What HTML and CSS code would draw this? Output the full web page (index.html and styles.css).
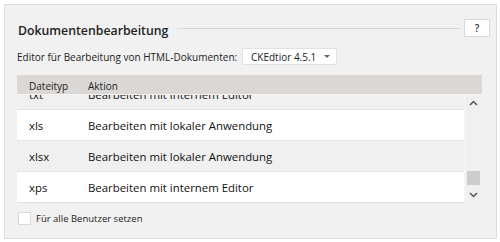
FILE: index.html
```html
<!DOCTYPE html>
<html lang="de">
<head>
  <meta charset="UTF-8">
  <title>Dokumentenbearbeitung</title>
  <link rel="stylesheet" href="styles.css">
</head>
<body>
  <div class="panel">
    <div class="title-row">
      <span class="title">Dokumentenbearbeitung</span>
      <span class="title-line"></span>
      <button class="help">?</button>
    </div>

    <div class="editor-row">
      <span class="editor-label">Editor für Bearbeitung von HTML-Dokumenten:</span>
      <div class="select">
        <span>CKEdtior 4.5.1</span>
        <span class="caret"></span>
      </div>
    </div>

    <div class="grid">
      <div class="grid-head">
        <span class="col-type">Dateityp</span>
        <span class="col-action">Aktion</span>
      </div>
      <div class="grid-main">
        <div class="grid-body">
          <div class="rows">
            <div class="row alt"><span class="col-type">txt</span><span class="col-action">Bearbeiten mit internem Editor</span></div>
            <div class="row"><span class="col-type">xls</span><span class="col-action">Bearbeiten mit lokaler Anwendung</span></div>
            <div class="row alt"><span class="col-type">xlsx</span><span class="col-action">Bearbeiten mit lokaler Anwendung</span></div>
            <div class="row"><span class="col-type">xps</span><span class="col-action">Bearbeiten mit internem Editor</span></div>
          </div>
        </div>
        <div class="scrollbar">
          <svg class="arrow" width="9" height="6" viewBox="0 0 9 6"><path d="M1 5 L4.5 1.5 L8 5" fill="none" stroke="#555" stroke-width="1.5"/></svg>
          <div class="track"><div class="thumb"></div></div>
          <svg class="arrow" width="9" height="6" viewBox="0 0 9 6"><path d="M1 1 L4.5 4.5 L8 1" fill="none" stroke="#555" stroke-width="1.5"/></svg>
        </div>
      </div>
    </div>

    <label class="check-row">
      <span class="checkbox"></span>
      <span>Für alle Benutzer setzen</span>
    </label>
  </div>
</body>
</html>
```

FILE: styles.css
```css
body { margin: 0; background: #ffffff; font-family: "Open Sans", "Noto Sans", sans-serif; font-size: 10px; color: #222; }
.panel { box-sizing: border-box; margin: 4px; width: 493px; height: 235px; background: #f1f1f1; border: 1px solid #dcdcdc; padding: 0 13px 0 12px; }

.title-row { display: flex; align-items: center; height: 18px; margin-top: 14px; }
.title { font-weight: 600; font-size: 12.3px; padding: 5px 0 0 1px; white-space: nowrap; }
.title-line { flex: 1; height: 1px; background: #d6d6d6; margin: 0 4px 0 9px; }
.help { box-sizing: border-box; width: 26px; height: 18px; margin-right: -7px; border: 1px solid #dadada; background: #fff; font-family: inherit; font-size: 10px; font-weight: 600; padding: 0; color: #333; }

.editor-row { display: flex; align-items: center; margin-top: 11px; height: 17px; }
.editor-label { width: 225px; white-space: nowrap; }
.select { box-sizing: border-box; display: flex; align-items: center; justify-content: space-between; width: 95px; height: 17px; background: #fff; border: 1px solid #e2e2e2; padding: 0 6px 0 8px; white-space: nowrap; }
.caret { width: 0; height: 0; border-left: 3px solid transparent; border-right: 3px solid transparent; border-top: 3px solid #666; }

.grid { margin-top: 10px; width: 465px; }
.grid-head { display: flex; align-items: center; height: 19px; background: #dbd7d5; border-bottom: 1px solid #f6f6f6; }
.grid-head span { padding-top: 2px; }
.col-type { width: 59px; padding-left: 12px; }
.col-action { flex: 1; white-space: nowrap; }
.grid-main { display: flex; height: 108px; }
.grid-body { flex: 1; overflow: hidden; border-bottom: 1px solid #e0e0e0; }
.rows { margin-top: -16px; }
.row { display: flex; align-items: center; height: 30px; background: #fff; border-bottom: 1px solid #e3e3e3; font-size: 11.4px; color: #111; }
.row.alt { background: #f0f0f0; }
.scrollbar { width: 17px; display: flex; flex-direction: column; align-items: center; background: #f0f0f0; border-left: 1px solid #f6f6f6; }
.arrow { margin: 5px 0; }
.track { flex: 1; width: 100%; display: flex; flex-direction: column; justify-content: flex-end; }
.thumb { height: 14px; margin: 0 2px 2px; background: #cdcdcd; }

.check-row { display: flex; align-items: center; gap: 5px; margin-top: 9px; padding-left: 1px; font-size: 9.5px; }
.checkbox { box-sizing: border-box; width: 13px; height: 13px; background: #fff; border: 1px solid #dadada; }
```
